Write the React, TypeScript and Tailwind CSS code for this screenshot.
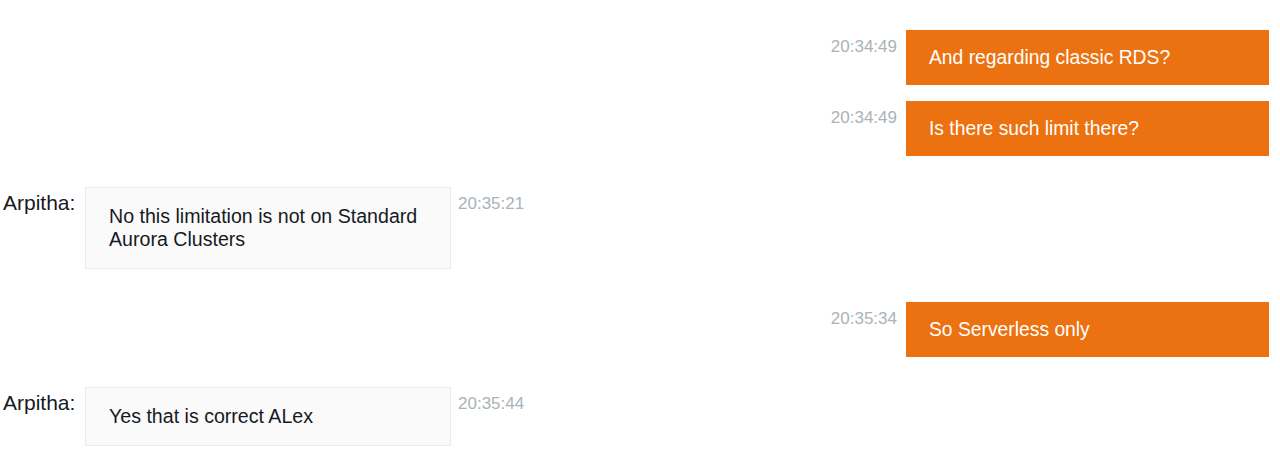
type Msg = {
  from: "me" | "agent";
  name?: string;
  time: string;
  text: string;
  space: string;
};

const MESSAGES: Msg[] = [
  { from: "me", time: "20:34:49", text: "And regarding classic RDS?", space: "mt-[30px]" },
  { from: "me", time: "20:34:49", text: "Is there such limit there?", space: "mt-[16px]" },
  {
    from: "agent",
    name: "Arpitha:",
    time: "20:35:21",
    text: "No this limitation is not on Standard Aurora Clusters",
    space: "mt-[31px]",
  },
  { from: "me", time: "20:35:34", text: "So Serverless only", space: "mt-[33px]" },
  {
    from: "agent",
    name: "Arpitha:",
    time: "20:35:44",
    text: "Yes that is correct ALex",
    space: "mt-[30px]",
  },
];

const Stamp = ({ time, className }: { time: string; className: string }) => (
  <span className={`mt-[7px] text-[17px] leading-[20px] text-[#aab3b8] whitespace-nowrap ${className}`}>
    {time}
  </span>
);

const MyMessage = ({ msg }: { msg: Msg }) => (
  <div className={`flex justify-end items-start pr-[11px] ${msg.space}`}>
    <Stamp time={msg.time} className="mr-[9px]" />
    <div className="w-[363px] bg-[#ec7211] text-white text-[19.3px] leading-[23px] px-[23px] py-[16px]">
      {msg.text}
    </div>
  </div>
);

const AgentMessage = ({ msg }: { msg: Msg }) => (
  <div className={`flex items-start pl-[3px] ${msg.space}`}>
    <span className="w-[82px] mt-[4px] text-[21px] leading-[24px] text-[#16191f]">{msg.name}</span>
    <div className="w-[366px] bg-[#fafafa] border border-[#e9ebec] text-[#16191f] text-[19.6px] leading-[23px] px-[23px] py-[17px]">
      {msg.text}
    </div>
    <Stamp time={msg.time} className="ml-[7px]" />
  </div>
);

export default function App() {
  return (
    <div className="w-[1280px] h-[458px] bg-white overflow-hidden font-['Liberation_Sans',Arial,sans-serif]">
      <div className="flex flex-col">
        {MESSAGES.map((m, i) =>
          m.from === "me" ? <MyMessage key={i} msg={m} /> : <AgentMessage key={i} msg={m} />
        )}
      </div>
    </div>
  );
}
